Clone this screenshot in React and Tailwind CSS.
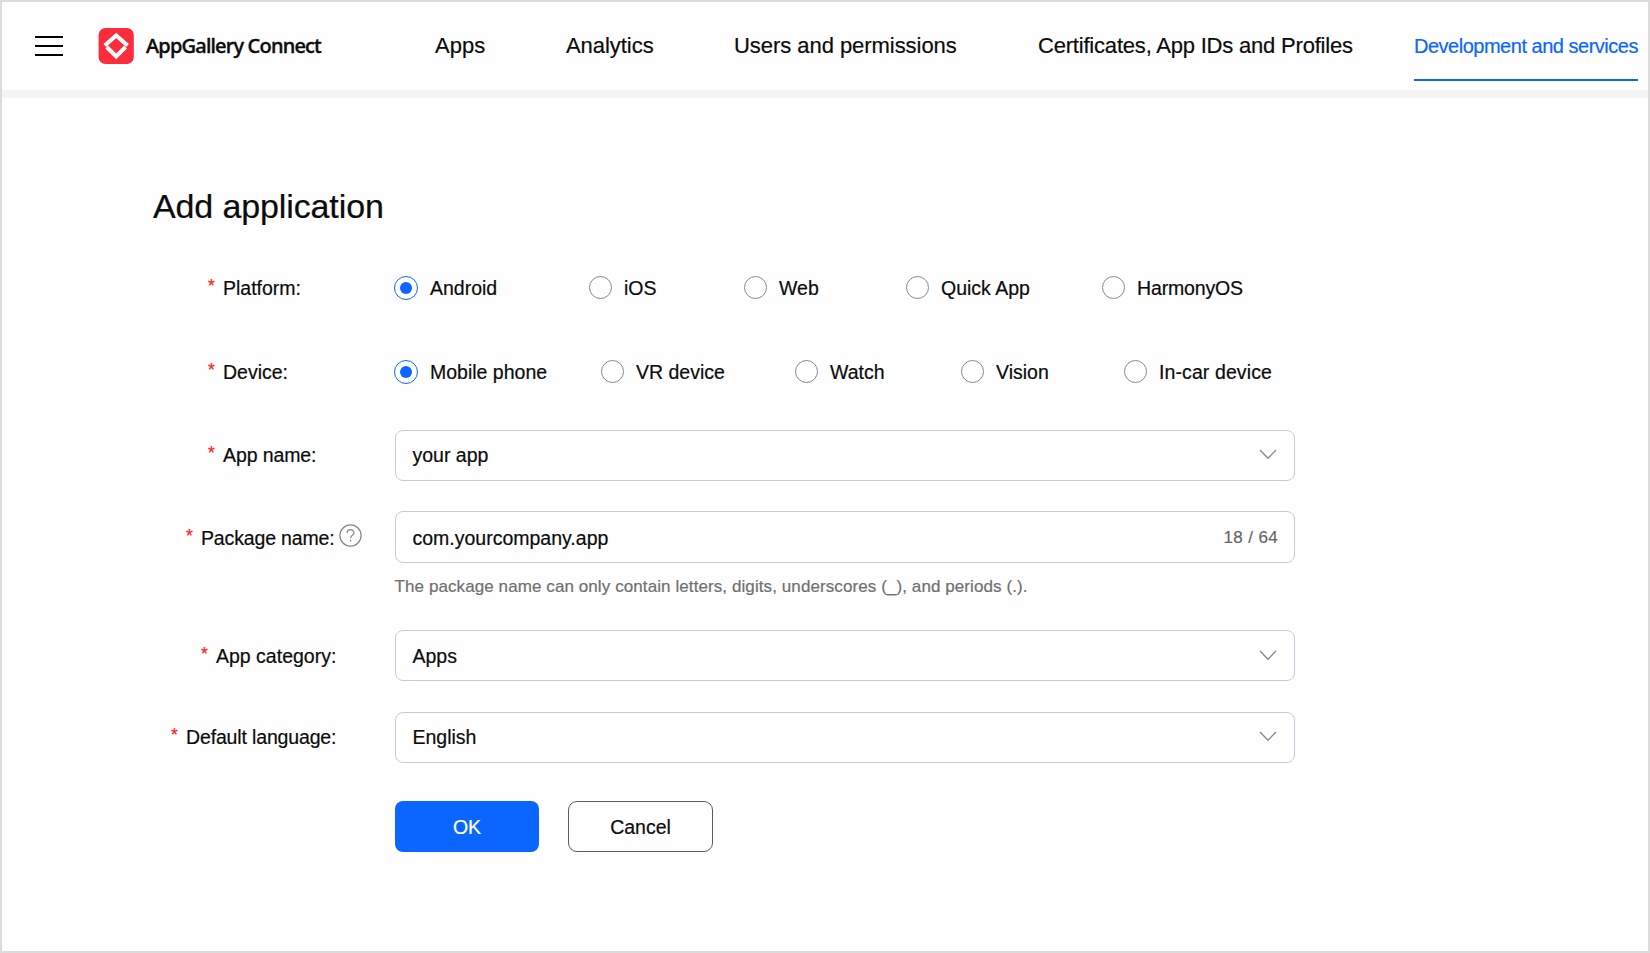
import React, { useState } from 'react';

const NAV_ITEMS = [
  { label: 'Apps', className: 'ml-[111px] w-[131px]' },
  { label: 'Analytics', className: 'w-[168px] tracking-[-0.05px]' },
  { label: 'Users and permissions', className: 'w-[304px] tracking-[-0.05px]' },
  { label: 'Certificates, App IDs and Profiles', className: 'w-[376px] tracking-[-0.2px]' },
];

const PLATFORMS = [
  { label: 'Android', className: 'w-[194px]' },
  { label: 'iOS', className: 'w-[155px]' },
  { label: 'Web', className: 'w-[162px]' },
  { label: 'Quick App', className: 'w-[196px]' },
  { label: 'HarmonyOS', className: 'tracking-[-0.15px]' },
];

const DEVICES = [
  { label: 'Mobile phone', className: 'w-[206px]' },
  { label: 'VR device', className: 'w-[194px]' },
  { label: 'Watch', className: 'w-[166px]' },
  { label: 'Vision', className: 'w-[163px]' },
  { label: 'In-car device', className: 'tracking-[0.1px]' },
];

function Logo() {
  return (
    <svg className="ml-[35px] h-[36px] w-[36px] shrink-0" viewBox="0 0 36 36" fill="none">
      <rect x="0.6" width="35.2" height="36" rx="7" fill="#fb2c3c" />
      <path d="M6.8 17.4 L18.2 7.4 L29.6 17.4" stroke="#fff" strokeWidth="4" />
      <path d="M8.8 19 L18.2 28.4 L27.6 19" stroke="#fff" strokeWidth="4" />
    </svg>
  );
}

function Chevron() {
  return (
    <svg className="h-[12px] w-[18px] -translate-y-px" viewBox="0 0 18 12" fill="none">
      <path d="M1 2 L9 10.2 L17 2" stroke="#85878c" strokeWidth="1.3" />
    </svg>
  );
}

function HelpIcon() {
  return (
    <svg className="ml-[4px] h-[23px] w-[23px] -translate-y-[2px]" viewBox="0 0 23 23" fill="none" stroke="#85878c" strokeWidth="1.2">
      <circle cx="11.5" cy="11.5" r="10.6" />
      <path d="M8.1 9.1 C8.1 4.6 15 4.6 15 8.8 C15 11.3 11.6 11.4 11.6 14.2" />
      <path d="M11.6 15.8 V17.4" />
    </svg>
  );
}

function Row({ label, className, labelClass, children, help }) {
  return (
    <div className={`flex items-center ${className}`}>
      <div className={`flex w-[393px] shrink-0 items-center whitespace-nowrap ${labelClass}`}>
        <span className="mr-[7px] w-[8px] -translate-y-[2px] text-[17.5px] text-[#ff1a1a]">*</span>
        <span>{label}</span>
        {help && <HelpIcon />}
      </div>
      {children}
    </div>
  );
}

function RadioGroup({ options, value, onChange }) {
  return (
    <div className="-ml-px flex items-center">
      {options.map((option) => (
        <button
          key={option.label}
          type="button"
          onClick={() => onChange(option.label)}
          className={`flex items-center whitespace-nowrap ${option.className}`}
        >
          {value === option.label ? (
            <span className="mr-[12px] flex h-[24px] w-[24px] items-center justify-center rounded-full border border-[#0a66ff]">
              <span className="h-[12px] w-[12px] rounded-full bg-[#0a66ff]" />
            </span>
          ) : (
            <span className="mr-[12px] ml-px h-[23px] w-[23px] rounded-full border border-[#85879a]" />
          )}
          {option.label}
        </button>
      ))}
    </div>
  );
}

function Field({ className, children }) {
  return (
    <div className={`flex w-[900px] items-center justify-between rounded-[8px] border border-[#c8cbdc] pl-[16.5px] ${className}`}>
      {children}
    </div>
  );
}

export default function App() {
  const [platform, setPlatform] = useState('Android');
  const [device, setDevice] = useState('Mobile phone');

  return (
    <div className="h-[953px] w-[1650px] overflow-hidden border-2 border-[#dcdcdc] bg-[#fefefe] font-['Liberation_Sans',Arial,sans-serif] text-[19.5px] leading-[24px] text-[#0c0c0c] [-webkit-text-stroke:0.2px]">
      {/* Top bar */}
      <header className="flex h-[96px] items-center border-b-8 border-[#f4f4f4] pb-px pl-[33px] text-[22px] whitespace-nowrap">
        <div className="flex w-[28px] shrink-0 flex-col gap-[7px]">
          <span className="h-[2px] bg-black" />
          <span className="h-[2px] bg-black" />
          <span className="h-[2px] bg-black" />
        </div>
        <Logo />
        <span className="ml-[12px] w-[178px] font-['Noto_Sans',sans-serif] text-[20px] font-medium tracking-[-0.8px] [-webkit-text-stroke:0.4px]">
          AppGallery Connect
        </span>
        <nav className="flex h-full items-center">
          {NAV_ITEMS.map((item) => (
            <a key={item.label} className={`shrink-0 ${item.className}`}>
              {item.label}
            </a>
          ))}
          <a className="mt-[10px] flex h-[69px] w-[224px] shrink-0 items-center self-start border-b-2 border-[#0a66ff] text-[20px] tracking-[-0.49px] text-[#0a66ff]">
            Development and services
          </a>
        </nav>
      </header>

      {/* Form */}
      <main>
        <h1 className="mt-[88px] pl-[151px] text-[34px] leading-[40px] tracking-[-0.12px]">Add application</h1>

        <Row label="Platform:" className="mt-[36px] h-[51px]" labelClass="pl-[206px]">
          <RadioGroup options={PLATFORMS} value={platform} onChange={setPlatform} />
        </Row>
        <Row label="Device:" className="mt-[33px] h-[51px]" labelClass="pl-[206px]">
          <RadioGroup options={DEVICES} value={device} onChange={setDevice} />
        </Row>
        <Row label="App name:" className="mt-[33px]" labelClass="pb-[2px] pl-[206px] tracking-[-0.1px]">
          <Field className="h-[51px] pr-[17px] pb-px">
            your app
            <Chevron />
          </Field>
        </Row>
        <Row label="Package name:" className="mt-[30px]" labelClass="pl-[184px] pt-px tracking-[-0.15px]" help>
          <Field className="h-[52px] pt-px pr-[16px]">
            com.yourcompany.app
            <span className="text-[17px] tracking-[0.35px] text-[#666]">18 / 64</span>
          </Field>
        </Row>
        <p className="mt-[12px] pl-[392.5px] text-[17px] tracking-[0.09px] text-[#707070]">
          The package name can only contain letters, digits, underscores (_), and periods (.).
        </p>
        <Row label="App category:" className="mt-[31px]" labelClass="pl-[199px]">
          <Field className="h-[51px] pr-[17px]">
            Apps
            <Chevron />
          </Field>
        </Row>
        <Row label="Default language:" className="mt-[31px]" labelClass="pb-[2px] pl-[169px] tracking-[-0.15px]">
          <Field className="h-[51px] pr-[17px] pb-px">
            English
            <Chevron />
          </Field>
        </Row>

        <div className="mt-[38px] flex gap-[29px] pl-[393px]">
          <button type="button" className="h-[51px] w-[144px] rounded-[8px] bg-[#0a66ff] text-white">
            OK
          </button>
          <button type="button" className="h-[51px] w-[145px] rounded-[9px] border border-[#5c5c5c]">
            Cancel
          </button>
        </div>
      </main>
    </div>
  );
}
